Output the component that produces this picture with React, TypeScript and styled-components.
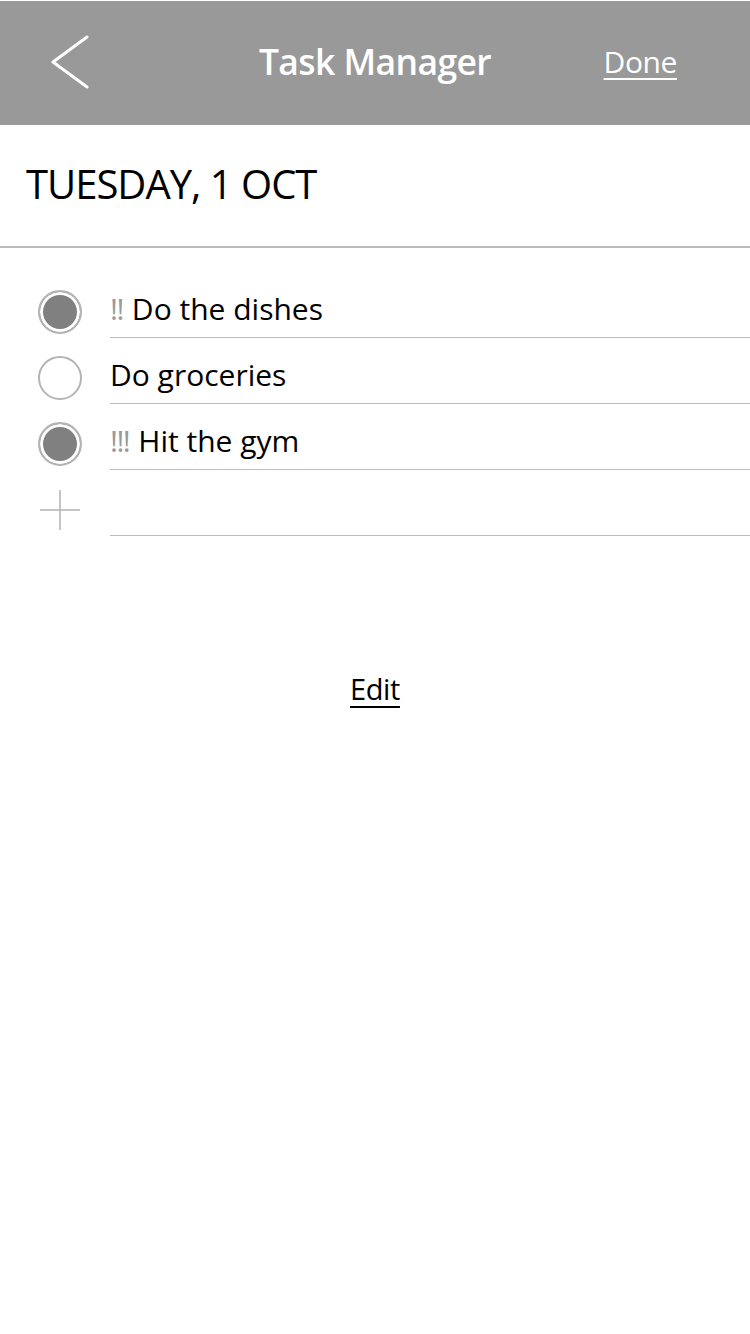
import React from "react";
import styled, { createGlobalStyle } from "styled-components";

const Global = createGlobalStyle`
  html, body { margin: 0; padding: 0; background: #fff; }
  body { font-family: "Open Sans", "Noto Sans", sans-serif; color: #000; }
`;

const Page = styled.div`
  width: 750px;
  min-height: 1334px;
  background: #fff;
  display: flex;
  flex-direction: column;
`;

const Header = styled.header`
  margin-top: 1px;
  height: 124px;
  background: #999999;
  display: grid;
  grid-template-columns: 1fr auto 1fr;
  align-items: center;
  padding: 0 50px 4px;
  box-sizing: border-box;
`;

const BackButton = styled.button`
  background: none;
  border: 0;
  padding: 0;
  width: 40px;
  height: 54px;
  justify-self: start;
  display: flex;
  margin-top: 2px;
`;

const Title = styled.h1`
  margin: 0;
  color: #fff;
  font-size: 35.5px;
  font-weight: 600;
  letter-spacing: -0.6px;
`;

const HeaderLink = styled.a`
  justify-self: end;
  margin-right: 23px;
  color: #fff;
  font-size: 30px;
  letter-spacing: -0.4px;
  text-decoration: underline;
  text-decoration-thickness: 2px;
  text-underline-offset: 5px;
`;

const DateBar = styled.div`
  height: 123px;
  border-bottom: 2px solid #bcbcbc;
  box-sizing: border-box;
  display: flex;
  align-items: center;
  padding: 0 0 4px 26px;
  font-size: 40px;
  letter-spacing: -1px;
`;

const List = styled.ul`
  list-style: none;
  margin: 0;
  padding: 24px 0 0;
`;

const Row = styled.li`
  display: flex;
  height: 66px;
`;

const Marker = styled.div`
  width: 110px;
  flex: none;
  display: flex;
  align-items: flex-end;
  justify-content: flex-start;
  padding: 0 0 4px 38px;
  box-sizing: border-box;
`;

const Check = styled.span<{ $done?: boolean }>`
  width: 44px;
  height: 44px;
  border-radius: 50%;
  box-sizing: border-box;
  border: 2px solid #b4b4b4;
  background: ${(p) => (p.$done ? "#808080" : "#fff")};
  box-shadow: ${(p) => (p.$done ? "inset 0 0 0 3px #fff" : "none")};
`;

const Label = styled.div`
  flex: 1;
  border-bottom: 1.5px solid #bcbcbc;
  display: flex;
  align-items: flex-end;
  padding-bottom: 13px;
  font-size: 30px;
  letter-spacing: 0;
  line-height: 1;
`;

const Priority = styled.span`
  color: #999;
  margin-right: 9px;
  letter-spacing: -1.5px;
`;

const Footer = styled.div`
  display: flex;
  justify-content: center;
  padding-top: 133px;
`;

const EditLink = styled.a`
  font-size: 29px;
  letter-spacing: -0.4px;
  color: #000;
  text-decoration: underline;
  text-decoration-thickness: 2px;
  text-underline-offset: 6px;
`;

const tasks = [
  { done: true, prio: "!!", text: "Do the dishes" },
  { done: false, prio: "", text: "Do groceries" },
  { done: true, prio: "!!!", text: "Hit the gym" },
];

export default function App() {
  return (
    <Page>
      <Global />
      <Header>
        <BackButton aria-label="Back">
          <svg width="40" height="54" viewBox="0 0 40 54">
            <path d="M37 2 L3 27 L37 52" fill="none" stroke="#fff" strokeWidth="3" strokeLinecap="round" strokeLinejoin="round" />
          </svg>
        </BackButton>
        <Title>Task Manager</Title>
        <HeaderLink>Done</HeaderLink>
      </Header>
      <DateBar>TUESDAY, 1 OCT</DateBar>
      <List>
        {tasks.map((t) => (
          <Row key={t.text}>
            <Marker>
              <Check $done={t.done} />
            </Marker>
            <Label>
              {t.prio && <Priority>{t.prio}</Priority>}
              {t.text}
            </Label>
          </Row>
        ))}
        <Row>
          <Marker>
            <svg width="44" height="44" viewBox="0 0 44 44">
              <path d="M22 2 V42 M2 22 H42" stroke="#b4b4b4" strokeWidth="1.5" />
            </svg>
          </Marker>
          <Label />
        </Row>
      </List>
      <Footer>
        <EditLink>Edit</EditLink>
      </Footer>
    </Page>
  );
}
